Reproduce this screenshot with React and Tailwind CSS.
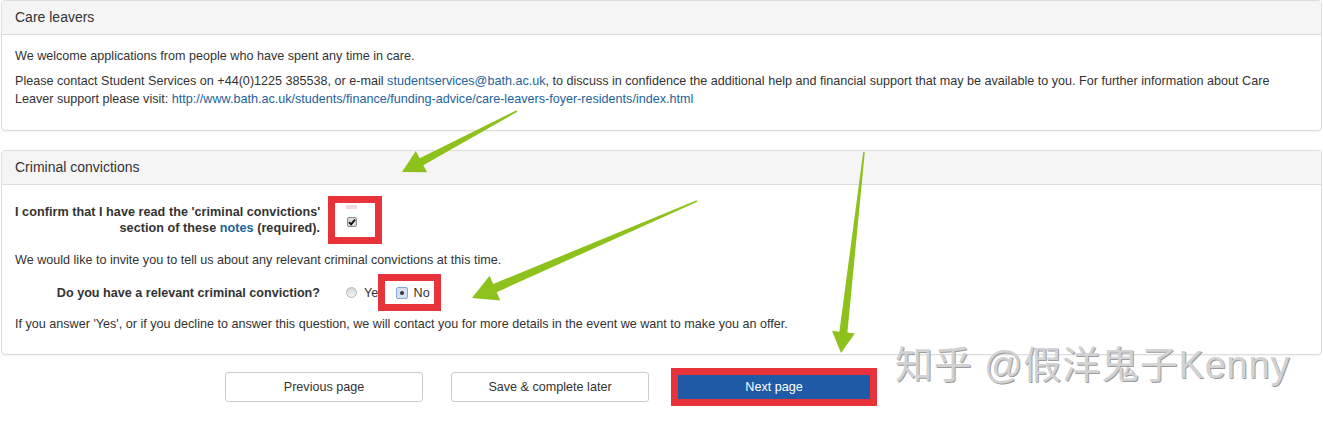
const FONT = { fontFamily: '"Liberation Sans", Arial, sans-serif' }

// green annotation arrows, coordinates in page pixels
const ARROWS = [
  { from: [517, 111], to: [402, 172], head: 22, headW: 24, shaft: 8 },
  { from: [697, 201], to: [472, 298], head: 25, headW: 27, shaft: 9 },
  { from: [864, 152], to: [841, 353], head: 21, headW: 23, shaft: 8 },
]

function arrowPoints({ from, to, head, headW, shaft }) {
  const [x1, y1] = from
  const [x2, y2] = to
  const dx = x2 - x1
  const dy = y2 - y1
  const len = Math.hypot(dx, dy)
  const ux = dx / len
  const uy = dy / len
  const nx = -uy
  const ny = ux
  const bx = x2 - ux * head
  const by = y2 - uy * head
  const p = (x, y) => `${x.toFixed(1)},${y.toFixed(1)}`
  return [
    p(x1 + nx * 0.8, y1 + ny * 0.8),
    p(bx + nx * shaft / 2, by + ny * shaft / 2),
    p(bx + nx * headW / 2, by + ny * headW / 2),
    p(x2, y2),
    p(bx - nx * headW / 2, by - ny * headW / 2),
    p(bx - nx * shaft / 2, by - ny * shaft / 2),
    p(x1 - nx * 0.8, y1 - ny * 0.8),
  ].join(' ')
}

function Panel({ title, children, className = '' }) {
  return (
    <div className={`border border-[#dddddd] rounded-[4px] bg-white shadow-[0_1px_1px_rgba(0,0,0,0.05)] ${className}`}>
      <div className="h-[34px] flex items-center px-[13px] bg-[#f5f5f5] border-b border-[#dddddd] rounded-t-[3px] text-[14px] text-[#333]">
        {title}
      </div>
      {children}
    </div>
  )
}

function Radio() {
  return <span className="inline-block w-[11px] h-[11px] rounded-full border border-[#b5b5b5] bg-gradient-to-b from-[#d9d9d9] to-[#f4f4f4]" />
}

function RadioChecked() {
  return (
    <span className="w-[12px] h-[12px] rounded-[2px] border border-[#8aa6d6] bg-[#d5e1f3] flex items-center justify-center">
      <span className="w-[4px] h-[4px] rounded-full bg-[#333]" />
    </span>
  )
}

export default function App() {
  return (
    <div className="relative w-[1323px] h-[423px] bg-white overflow-hidden text-[12.6px] text-[#333]" style={FONT}>
      <div className="px-px">
        <Panel title="Care leavers" className="mb-[19px]">
          <div className="pt-[12px] pb-[15px] px-[13px] leading-[18px]">
            <p className="mb-[7px]">We welcome applications from people who have spent any time in care.</p>
            <p className="mb-[7px]">
              Please contact Student Services on +44(0)1225 385538, or e-mail{' '}
              <a className="text-[#23629b]">studentservices@bath.ac.uk</a>, to discuss in confidence the additional help and financial support that may be available to you. For further information about Care Leaver support please visit:{' '}
              <a className="text-[#23629b]">http://www.bath.ac.uk/students/finance/funding-advice/care-leavers-foyer-residents/index.html</a>
            </p>
          </div>
        </Panel>

        <Panel title="Criminal convictions">
          <div className="pt-[11px] pb-[21px] px-[13px] leading-[18px]">
            <div className="flex items-center">
              <div className="w-[305px] text-right font-bold leading-[16px] whitespace-nowrap tracking-[0.05px]">
                I confirm that I have read the 'criminal convictions'<br />
                section of these <a className="text-[#23629b]">notes</a> (required).
              </div>
              <div className="ml-[8px] w-[54px] h-[48px] border-[7px] border-[#e8333a] bg-white flex flex-col pl-[11px] pt-[2px]">
                <span className="w-[11px] h-[4px] bg-[#f3d7e1]" />
                <span className="mt-[8px] ml-px w-[10px] h-[10px] rounded-[2px] border border-[#8c8c8c] bg-[#dcdcdc] flex items-center justify-center">
                  <svg width="8" height="8" viewBox="0 0 8 8">
                    <path d="M1 4.2 L3.1 6.3 L7 1.6" fill="none" stroke="#111" strokeWidth="1.8" />
                  </svg>
                </span>
              </div>
            </div>

            <p className="mt-[7px]">We would like to invite you to tell us about any relevant criminal convictions at this time.</p>

            <div className="mt-[5px] flex items-center h-[37px]">
              <div className="w-[305px] text-right font-bold whitespace-nowrap">Do you have a relevant criminal conviction?</div>
              <div className="ml-[26px] flex items-center">
                <Radio />
                <span className="ml-[7px]">Yes</span>
              </div>
              <div className="relative z-10 -ml-[7px] h-[37px] w-[63px] border-[7px] border-[#e8333a] bg-white flex items-center pl-[11px] gap-[6px]">
                <RadioChecked />
                <span>No</span>
              </div>
            </div>

            <p className="mt-[4px]">If you answer 'Yes', or if you decline to answer this question, we will contact you for more details in the event we want to make you an offer.</p>
          </div>
        </Panel>

        <div className="mt-[13px] flex items-center pl-[224px]">
          <button className="w-[198px] h-[30px] border border-[#cccccc] rounded-[3px] bg-white text-[12.6px] text-[#333]">Previous page</button>
          <button className="ml-[28px] w-[198px] h-[30px] border border-[#cccccc] rounded-[3px] bg-white text-[12.6px] text-[#333]">Save &amp; complete later</button>
          <div className="ml-[22px] border-[7px] border-[#e8333a]">
            <button className="block w-[192px] h-[24px] bg-[#1f5aa6] text-white text-[12.6px]">Next page</button>
          </div>
        </div>
      </div>

      <div
        className="absolute left-[895px] top-[342px] text-[38px] leading-[46px] text-[#d2d2d2] tracking-[0.8px] whitespace-nowrap [text-shadow:1px_1px_0_#9c9c9c] pointer-events-none"
        style={{ fontFamily: '"Liberation Sans", "Noto Sans CJK SC", sans-serif' }}
      >
        知乎 @假洋鬼子Kenny
      </div>

      <svg className="absolute inset-0 pointer-events-none" width="1323" height="423">
        {ARROWS.map((a, i) => (
          <polygon key={i} points={arrowPoints(a)} fill="#8cc21b" />
        ))}
      </svg>
    </div>
  )
}
